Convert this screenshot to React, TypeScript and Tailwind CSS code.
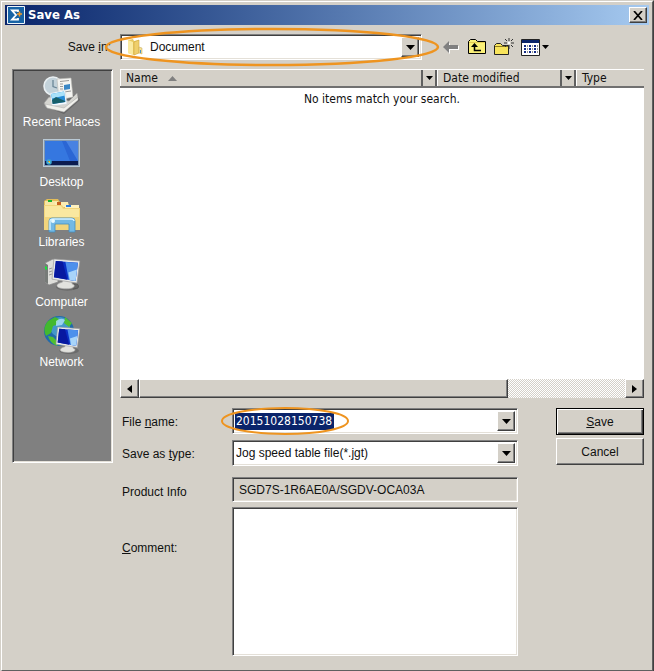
import type { ReactNode } from "react";

const sunken =
  "border border-t-[#808080] border-l-[#808080] border-r-white border-b-white shadow-[inset_1px_1px_0_#404040,inset_-1px_-1px_0_#e4e0d8]";
const raised =
  "bg-[#d4d0c8] border border-t-white border-l-white border-r-[#404040] border-b-[#404040] shadow-[inset_-1px_-1px_0_#808080]";
const tahoma = "font-['DejaVu_Sans_Condensed','DejaVu_Sans',sans-serif]";

function Down({ small = false }: { small?: boolean }) {
  return (
    <svg width={small ? 7 : 9} height={small ? 4 : 5} viewBox="0 0 9 5" aria-hidden="true">
      <path d="M0 0h9L4.5 5z" fill="#000" />
    </svg>
  );
}

function Arrow() {
  return (
    <span className={`pointer-events-none absolute inset-y-0.5 right-0.5 flex w-[18px] items-center justify-center ${raised}`}>
      <Down />
    </span>
  );
}

function Monitor({ x, y, s = 1 }: { x: number; y: number; s?: number }) {
  return (
    <g transform={`translate(${x} ${y}) scale(${s})`}>
      <ellipse cx="16" cy="29" rx="12" ry="4" fill="#555" opacity=".5" />
      <path d="M11 21l9 1 1 4c4 1 3 5-6 5s-13-3-7-6l3-1z" fill="#e2e2de" stroke="#aaa" strokeWidth=".7" />
      <path d="M2 0l27 2-3 23L0 21z" fill="#e9eaea" stroke="#9a9a9a" strokeWidth=".7" />
      <path d="M4 2l23 2-2.500 19L2 19z" fill="#0a2fc4" />
      <path d="M14 3l13 1-2.500 19-7-1z" fill="#4d90ec" />
      <path d="M17 14l9-3-1.500 12-6-1z" fill="#b9e0fb" opacity=".85" />
      <path d="M4 2l7 .6 5 19L2 19z" fill="#0718a0" />
    </g>
  );
}

function RecentIcon() {
  return (
    <svg width="38" height="38" viewBox="0 0 38 38" aria-hidden="true">
      <path d="M3 31l18 7 16-14-2-4-12-3-20 8z" fill="#4c4c4c" opacity=".5" />
      <circle cx="10" cy="10" r="9" fill="#c3d2da" stroke="#e9eff2" strokeWidth="1.600" />
      <path d="M10 4v6.500l4 1.500" fill="none" stroke="#6b8798" strokeWidth="1.300" />
      <path d="M14 3l14-1 2 19-14 3z" fill="#f4f4f1" stroke="#b7b7b2" strokeWidth=".6" />
      <path d="M17 5.500l9-1M17 8h3M17 10.500h3M17 13h3M21 16l7-1" stroke="#999" />
      <path d="M21 9l6-1v5l-6 1z" fill="#3b87c5" />
      <path d="M1 27l5-6 20 4 8-8 1 4-14 13L3 31z" fill="#d5d5d0" stroke="#999" strokeWidth=".7" />
      <path d="M7 17l15-3 2 14-15 2z" fill="#f7fbff" stroke="#c5cfd5" strokeWidth=".5" />
      <path d="M8 18l13-2.500L22.500 26 10 28z" fill="#268bd6" />
      <path d="M8 18l13-2.500.8 4-12.800 3z" fill="#a8e1fa" />
      <path d="M9 24l4-3 9 4v1l-12.500 2z" fill="#175f6a" />
      <path d="M2 28l19 4 14-11v3L21 36 4 32z" fill="#f0f0eb" stroke="#aaa" strokeWidth=".5" />
    </svg>
  );
}

function DesktopIcon() {
  return (
    <svg width="38" height="38" viewBox="0 0 38 38" aria-hidden="true">
      <path d="M0 3h37v28H0z" fill="#b9c9d5" />
      <path d="M1 4h35v26H1z" fill="#8199b3" />
      <path d="M2 5h33v20H2z" fill="#2b66d4" />
      <path d="M2 5h17l8 20H2z" fill="#3c82e8" opacity=".6" />
      <path d="M23 5h12v20z" fill="#5b94eb" opacity=".6" />
      <path d="M2 25h33v4H2z" fill="#0b1c50" />
      <circle cx="6" cy="26" r="2.800" fill="#3aa7d1" />
      <path d="M5 25h1v1H5z" fill="#f1692b" />
      <path d="M6 25h1v1H6z" fill="#aadd38" />
      <path d="M5 26h1v1H5z" fill="#44c8ff" />
      <path d="M6 26h1v1H6z" fill="#ffd83a" />
    </svg>
  );
}

function LibrariesIcon() {
  return (
    <svg width="38" height="38" viewBox="0 0 38 38" aria-hidden="true">
      <path d="M1 5l3-2h11l2 3h7l2 3h10v25H1z" fill="#e3bd59" />
      <path d="M2 5h13l1 4H2z" fill="#f8e7a5" />
      <path d="M12 6h13l1 5H12z" fill="#fbedb3" />
      <path d="M22 9h14v5H22z" fill="#fff2bf" />
      <path d="M5 4h4v2H5z" fill="#18b530" />
      <path d="M14 6h4v3h-4z" fill="#c76120" />
      <path d="M23 9h5v2h-5z" fill="#277bdf" />
      <path d="M1 9h18l2 3h16v22H1z" fill="#f2d57c" />
      <path d="M2 10h16l2 3h16v8H2z" fill="#fae8a0" />
      <path d="M6 36V25q0-3 3-3h20q3 0 3 3v11h-6v-8H12v8z" fill="#74b9e4" stroke="#428ebf" strokeWidth=".8" />
      <path d="M7 34v-9q0-2 3-2h18q3 0 3 2" fill="none" stroke="#d4f2ff" strokeWidth="1.400" />
      <circle cx="10" cy="25" r="2" fill="#e8faff" />
    </svg>
  );
}

function ComputerIcon() {
  return (
    <svg width="38" height="38" viewBox="0 0 38 38" aria-hidden="true">
      <path d="M2 7l8-4 5 2v21l-9 3-4-3z" fill="#dededa" stroke="#888" strokeWidth=".7" />
      <path d="M2 7l3 2v19l-3-2z" fill="#777b78" />
      <path d="M2 10l2 1v3l-2-1z" fill="#17e438" />
      <path d="M6 13l3-1M6 16l3-1M6 19l3-1" stroke="#999" />
      <path d="M30 28q7-1 5 4l-5 1" fill="#777" stroke="#444" strokeWidth=".6" />
      <Monitor x={9} y={3} s={0.96} />
    </svg>
  );
}

function NetworkIcon() {
  return (
    <svg width="38" height="38" viewBox="0 0 38 38" aria-hidden="true">
      <circle cx="16" cy="15" r="15" fill="#216aab" />
      <circle cx="17" cy="11" r="10" fill="#5cb5df" opacity=".6" />
      <path d="M5 5l7-4 4 2-3 6-3 1-2 7-5 3q-4-8 2-15z" fill="#43b92e" />
      <path d="M5 20l5 1 5 5-1 4Q7 27 5 20zM22 1l7 6-3 4-5-4z" fill="#51bf31" />
      <path d="M13 5q5-4 9-1l-3 5-6 1z" fill="#b7e7f8" opacity=".75" />
      <Monitor x={13} y={11} s={0.82} />
    </svg>
  );
}

const places: [string, ReactNode][] = [
  ["Recent Places", <RecentIcon />],
  ["Desktop", <DesktopIcon />],
  ["Libraries", <LibrariesIcon />],
  ["Computer", <ComputerIcon />],
  ["Network", <NetworkIcon />],
];

function FolderIcon() {
  return (
    <svg width="18" height="18" viewBox="0 0 18 18" aria-hidden="true">
      <path d="M2 2l5-1 1 2 5-1v13l-5 2-6-2z" fill="#e7c85f" />
      <path d="M2 2l5 2v13l-5-2z" fill="#faeaa1" />
      <path d="M8 4l5-2v13l-5 2z" fill="#efcf6b" stroke="#d2aa43" strokeWidth=".6" />
      <path d="M13 9l3 1v6l-3-1z" fill="#f5df92" stroke="#c3a65a" strokeWidth=".5" />
      <path d="M14 12h1v3h-1z" fill="#4795c9" />
    </svg>
  );
}

function Toolbar() {
  return (
    <div className="ml-[21px] flex items-center">
      <button aria-label="Back" className="w-[25px]">
        <svg width="16" height="14" viewBox="0 0 16 14">
          <path d="M1 8l6-5v3h9v4H7v4z" fill="#fff" />
          <path d="M0 7l6-6v4h9v4H6v4z" fill="#808080" />
        </svg>
      </button>
      <button aria-label="Up one level" className="w-[26px]">
        <svg width="18" height="16" viewBox="0 0 18 16">
          <path d="M.5 14.500v-12l2-2h5l2 2h8v12z" fill="#fbf078" stroke="#000" />
          <path d="M1 3.500h16" stroke="#e2cc53" />
          <path d="M6.500 7v4.500H13" fill="none" stroke="#000" strokeWidth="1.500" />
          <path d="M3 8l3.500-4L10 8z" />
        </svg>
      </button>
      <button aria-label="Create new folder" className="w-[27px]">
        <svg width="20" height="18" viewBox="0 0 20 18">
          <path d="M.5 16.500v-9l2-2h4l2 2h6v9z" fill="#f8e45c" stroke="#222" />
          <path d="M1 8.500h13" stroke="#8d7a20" />
          <path d="M15 0v3M15 7v4M10 5h3M17 5h3M11 1l2 2M17 7l2 2M19 1l-2 2M11 9l2-2" stroke="#333" />
          <path d="M14 4h2v2h-2z" fill="#fff" />
        </svg>
      </button>
      <button aria-label="View menu" className="flex items-center gap-0.5">
        <svg width="19" height="17" viewBox="0 0 19 17">
          <path d="M.5.500h18v16H.5z" fill="#fff" stroke="#222" />
          <path d="M1 1h17v3H1z" fill="#0a246a" />
          <path d="M3 6h2v2H3zM8 6h2v2H8zM13 6h2v2h-2zM3 9h2v2H3zM8 9h2v2H8zM13 9h2v2h-2zM3 12h2v2H3zM8 12h2v2H8zM13 12h2v2h-2z" fill="#142c86" />
          <path d="M6 7h1M11 7h1M16 7h1M6 10h1M11 10h1M16 10h1M6 13h1M11 13h1M16 13h1" stroke="#222" />
        </svg>
        <Down small />
      </button>
    </div>
  );
}

function HeaderCell({ title, menu, sorted }: { title: string; menu?: boolean; sorted?: boolean }) {
  return (
    <th className="p-0 font-normal">
      <div className="flex h-[19px] border-t border-b-2 border-t-white border-b-[#707070] bg-[#d4d0c8]">
        <span className="flex min-w-0 flex-1 items-center gap-2.5 border-l border-white pl-[5px] text-left">
          {title}
          {sorted && (
            <svg width="9" height="5" viewBox="0 0 9 5" aria-hidden="true">
              <path d="M0 5h9L4.500 0z" fill="#808080" />
            </svg>
          )}
        </span>
        {menu && (
          <button aria-label={`Filter ${title}`} className="flex w-4 items-center justify-center border-r-2 border-l-2 border-r-[#606060] border-l-[#606060]">
            <Down small />
          </button>
        )}
      </div>
    </th>
  );
}

export default function App() {
  return (
    <main className="border border-t-[#d4d0c8] border-l-[#d4d0c8] border-r-[#404040] border-b-[#404040] bg-[#d4d0c8] font-['Liberation_Sans',Arial,sans-serif] text-[12px] leading-4 text-[#101010]">
      <div className="border border-t-white border-l-white border-r-[#606060] border-b-[#606060] px-[3px] pt-[3px] pb-[14px]">
        <header className="flex h-5 items-center bg-linear-to-r from-[#0a246a] to-[#a6caf0] pr-0.5 text-white">
          <svg width="18" height="18" viewBox="0 0 18 18" className="ml-0.5" aria-hidden="true">
            <path d="M.5.500h17v17H.5z" fill="#1763a5" stroke="#eef5fa" />
            <path d="M11 6V4.500H5L9 9l-4 4.500h6V12" fill="none" stroke="#fff" strokeWidth="1.800" />
            <path d="M10 8h5M12.500 5.500v5" stroke="#f29a2b" strokeWidth="1.500" />
          </svg>
          <h1 className={`ml-[3px] flex-1 text-[13px] font-bold ${tahoma}`}>Save As</h1>
          <button aria-label="Close" className={`flex h-4 w-[18px] items-center justify-center ${raised}`}>
            <svg width="10" height="9" viewBox="0 0 10 9">
              <path d="M1 0l8 9M9 0L1 9" stroke="#000" strokeWidth="1.700" />
            </svg>
          </button>
        </header>

        <div className="pr-[5px] pl-[7px]">
          <div className="flex h-11 items-center">
            <label htmlFor="folder" className="w-[108px] pr-[9px] text-right">
              Save <u>i</u>n:
            </label>
            <div className={`relative h-[26px] w-[302px] bg-white ${sunken}`}>
              <span className="pointer-events-none absolute top-[3px] left-[5px]"><FolderIcon /></span>
              <select id="folder" className="h-full w-full appearance-none bg-transparent pl-[29px] outline-none">
                <option>Document</option>
              </select>
              <Arrow />
              <svg className="pointer-events-none absolute -top-[8px] -left-[17px]" width="336" height="40" viewBox="0 0 336 40" aria-hidden="true">
                <ellipse cx="168" cy="20" rx="166" ry="18" fill="none" stroke="#ee9420" strokeWidth="2.500" />
              </svg>
            </div>
            <Toolbar />
          </div>

          <div className="flex items-start gap-[7px]">
            <nav className={`flex h-[394px] w-[101px] shrink-0 flex-col gap-1.5 bg-[#808080] pt-1.5 pr-0.5 text-white ${sunken}`}>
              {places.map(([name, icon]) => (
                <button key={name} className="flex flex-col items-center whitespace-nowrap">
                  {icon}
                  {name}
                </button>
              ))}
            </nav>

            <div className="min-w-0 flex-1">
              <section className="flex h-[329px] flex-col bg-white">
                <table className={`w-full table-fixed border-collapse ${tahoma}`}>
                  <colgroup>
                    <col />
                    <col className="w-[139px]" />
                    <col className="w-[68px]" />
                  </colgroup>
                  <thead>
                    <tr>
                      <HeaderCell title="Name" menu sorted />
                      <HeaderCell title="Date modified" menu />
                      <HeaderCell title="Type" />
                    </tr>
                  </thead>
                  <tbody>
                    <tr>
                      <td colSpan={3} className="pt-[3px] text-center">No items match your search.</td>
                    </tr>
                  </tbody>
                </table>
                <div className="mt-auto flex h-[19px] bg-[repeating-conic-gradient(#ffffff_0_25%,#d4d0c8_0_50%)] bg-size-[2px_2px]">
                  <button aria-label="Scroll left" className={`flex w-[19px] items-center justify-center ${raised}`}>
                    <svg width="5" height="8" viewBox="0 0 5 8"><path d="M5 0v8L0 4z" /></svg>
                  </button>
                  <div className="flex-1">
                    <div className={`h-full w-[76%] ${raised}`} />
                  </div>
                  <button aria-label="Scroll right" className={`flex w-[19px] items-center justify-center ${raised}`}>
                    <svg width="5" height="8" viewBox="0 0 5 8"><path d="M0 0v8l5-4z" /></svg>
                  </button>
                </div>
              </section>

              <form className="mt-2.5 flex justify-between pl-0.5" onSubmit={(e) => e.preventDefault()}>
                <div className="grid grid-cols-[110px_286px]">
                  <label htmlFor="name" className="pt-1.5">File <u>n</u>ame:</label>
                  <div className={`relative flex h-[26px] items-center bg-white pl-0.5 ${sunken}`}>
                    <input id="name" defaultValue="20151028150738" className={`h-[17px] w-[99px] bg-[#0a246a] pl-px text-white outline-none ${tahoma}`} />
                    <Arrow />
                    <svg className="pointer-events-none absolute -top-[3px] -left-[13px]" width="130" height="30" viewBox="0 0 130 30" aria-hidden="true">
                      <ellipse cx="65" cy="15" rx="63" ry="13" fill="none" stroke="#ee9420" strokeWidth="2" />
                    </svg>
                  </div>
                  <label htmlFor="type" className="pt-3">Save as <u>t</u>ype:</label>
                  <div className={`relative mt-1.5 h-[26px] bg-white ${sunken}`}>
                    <select id="type" className="h-full w-full appearance-none bg-transparent pl-[3px] outline-none">
                      <option>Jog speed table file(*.jgt)</option>
                    </select>
                    <Arrow />
                  </div>
                  <label htmlFor="product" className="pt-[18px]">Product Info</label>
                  <input id="product" readOnly defaultValue="SGD7S-1R6AE0A/SGDV-OCA03A" className={`mt-[11px] h-[25px] bg-[#d4d0c8] pl-1.5 outline-none ${sunken}`} />
                  <label htmlFor="comment" className="pt-[38px]"><u>C</u>omment:</label>
                  <textarea id="comment" className={`mt-[5px] h-[149px] resize-none bg-white outline-none ${sunken}`} />
                </div>
                <div className="flex w-[88px] flex-col gap-[3px]">
                  <button className="h-[27px] border border-black bg-[#d4d0c8] shadow-[inset_1px_1px_0_#fff,inset_-1px_-1px_0_#404040,inset_-2px_-2px_0_#808080]"><u>S</u>ave</button>
                  <button type="button" className={`h-[27px] ${raised}`}>Cancel</button>
                </div>
              </form>
            </div>
          </div>
        </div>
      </div>
    </main>
  );
}
